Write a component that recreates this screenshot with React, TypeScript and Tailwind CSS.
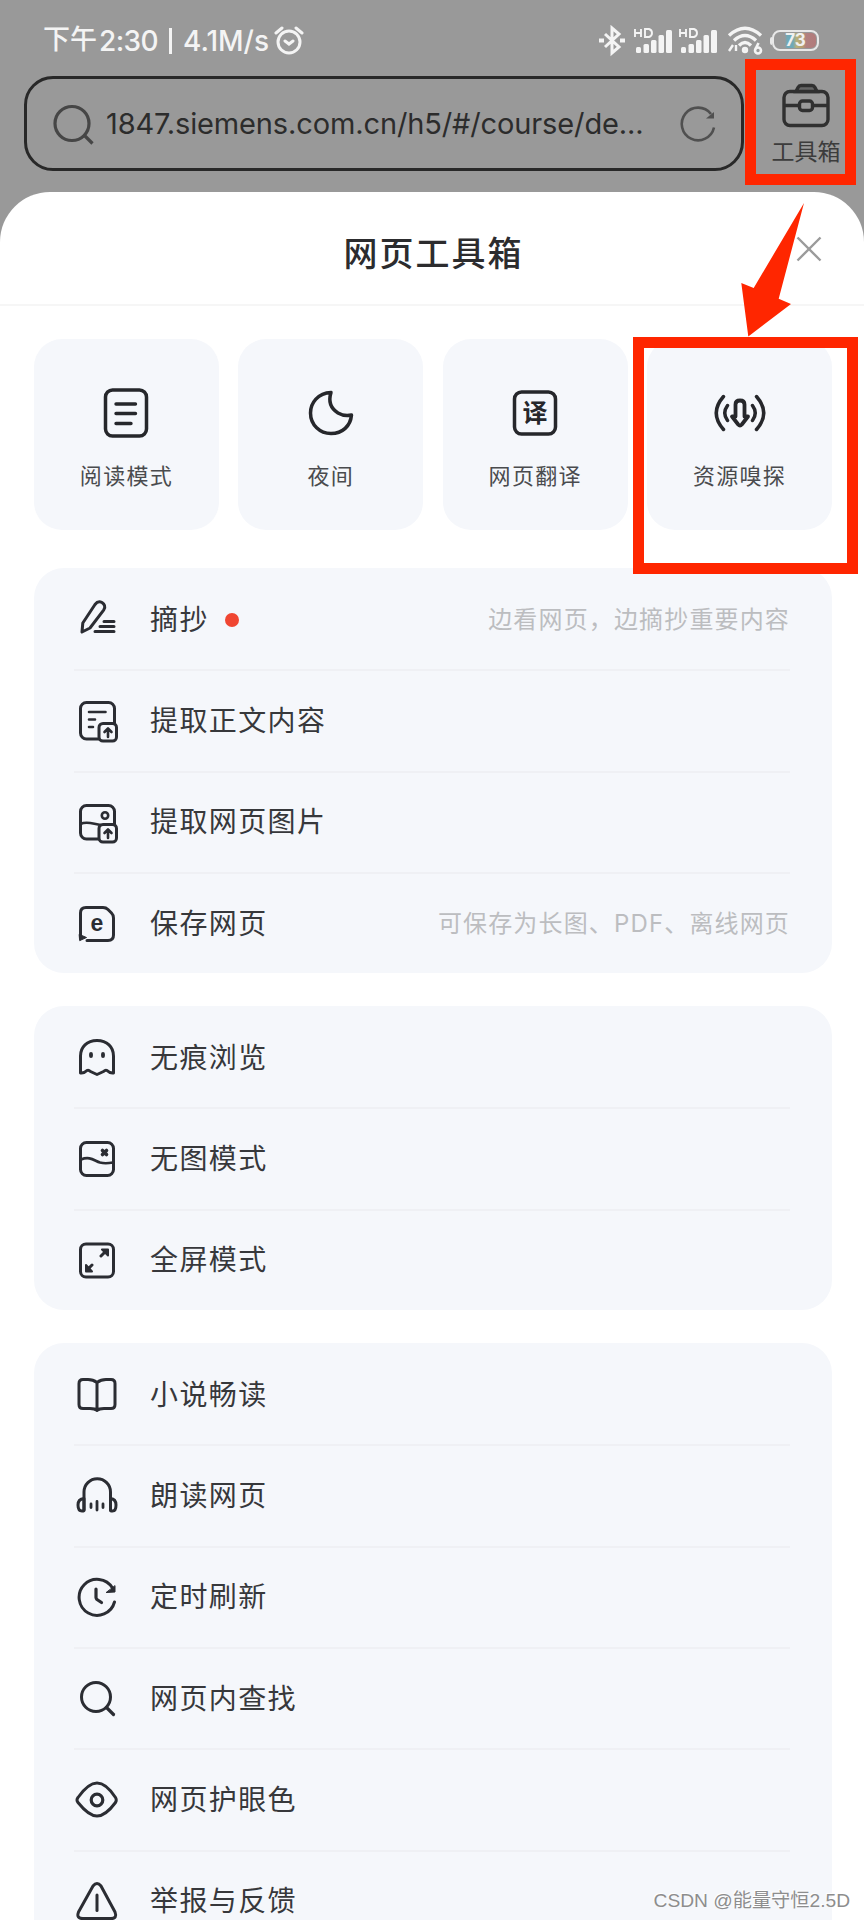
import type { ReactNode } from "react";

type Row = {
  label: string;
  icon: ReactNode;
  note?: string;
  dot?: boolean;
};

function RowIcon({ children }: { children: ReactNode }) {
  return (
    <svg
      className="w-11 h-11 shrink-0"
      viewBox="-22 -22 44 44"
      fill="none"
      stroke="#2b2d33"
      strokeWidth="3"
      strokeLinecap="round"
      strokeLinejoin="round"
    >
      {children}
    </svg>
  );
}

const UploadBox = () => (
  <>
    <rect x="3" y="2.500" width="17.500" height="17.500" rx="4" fill="#f5f7fb" />
    <path d="M12 16V8M8.500 11l3.500-3.500 3.500 3.500" strokeWidth="2.600" />
  </>
);

const groups: Row[][] = [
  [
    {
      label: "摘抄",
      note: "边看网页，边摘抄重要内容",
      dot: true,
      icon: (
        <RowIcon>
          <path d="M-14 12l.8-9L-1-15.500Q2-19.500 6-17.500Q10.500-14.500 7.800-10.200L-6 8z" />
          <path d="M8 1.500h10M4 6.500h14M-1 11.500h19" strokeWidth="3" />
        </RowIcon>
      ),
    },
    {
      label: "提取正文内容",
      icon: (
        <RowIcon>
          <rect x="-15.500" y="-18.500" width="34" height="36.500" rx="6" />
          <path d="M-7-9H9.500M-7-1.500H-1M-7 6h4" strokeWidth="2.600" />
          <UploadBox />
        </RowIcon>
      ),
    },
    {
      label: "提取网页图片",
      icon: (
        <RowIcon>
          <rect x="-15.500" y="-16.500" width="34" height="33.500" rx="6" />
          <path d="M-15.500 2C-9-1.500-3 2 5 3" strokeWidth="2.600" />
          <circle cx="9" cy="-6.500" r="3.200" strokeWidth="2.600" />
          <UploadBox />
        </RowIcon>
      ),
    },
    {
      label: "保存网页",
      note: "可保存为长图、PDF、离线网页",
      icon: (
        <RowIcon>
          <path d="M-15.500 14V-11q0-5.500 5.500-5.500H7q3 0 5 2l3.500 3.500q2 2 2 5V11q0 5.500-5.500 5.500H-9" />
          <path d="M-16.500 10.500L-9.500 13.500L-16 16.500z" fill="#2b2d33" strokeWidth="1" />
          <text
            x="1"
            y="6.500"
            textAnchor="middle"
            fill="#2b2d33"
            stroke="none"
            className="font-['Liberation_Sans',sans-serif] font-bold text-[23px]"
          >
            e
          </text>
        </RowIcon>
      ),
    },
  ],
  [
    {
      label: "无痕浏览",
      icon: (
        <RowIcon>
          <path d="M-15.500-2C-15.500-11-9-17.500 1-17.500S17.500-11 17.500-2V15Q14 15.500 11 12.500Q9.500 11.500 7.500 13.500L1 16.500L-5.500 13.500Q-7.500 11.500-9 12.500Q-12 15.500-15.500 15z" />
          <path d="M-5-4v2M7-4v2" strokeWidth="3.800" />
        </RowIcon>
      ),
    },
    {
      label: "无图模式",
      icon: (
        <RowIcon>
          <rect x="-15.500" y="-16.500" width="33" height="33" rx="6" />
          <path d="M-15 .5C-6-3-2 1.500 4 3.500Q9 5 17 3.500" strokeWidth="2.700" />
          <path d="M6.500-8.500l4 4M10.500-8.500l-4 4" strokeWidth="3.600" />
        </RowIcon>
      ),
    },
    {
      label: "全屏模式",
      icon: (
        <RowIcon>
          <rect x="-15.500" y="-16" width="33" height="33" rx="5.500" />
          <path d="M5-4l5-5M-4 5l-5 5" />
          <path d="M6-10.500h6v6zM-10 5v6.500h6z" fill="#2b2d33" strokeWidth="2" />
        </RowIcon>
      ),
    },
  ],
  [
    {
      label: "小说畅读",
      icon: (
        <RowIcon>
          <path d="M1-12.500Q-3-15.500-8-15.500H-13Q-17-15.500-17-11.500V9.500Q-17 13.500-13 13.500H-6Q-1 13.500 1 15.500Q3 13.500 8 13.500H15Q19 13.500 19 9.500V-11.500Q19-15.500 15-15.500H10Q5-15.500 1-12.500V14" />
        </RowIcon>
      ),
    },
    {
      label: "朗读网页",
      icon: (
        <RowIcon>
          <path d="M-12 14V-4A13.200 13.200 0 0 1 14.500-4V14" />
          <path d="M-12 2.500Q-18 3-18 9T-14 15Q-12 15.500-12 14zM14.500 2.500Q20 3 20 9T16.500 15Q14.500 15.500 14.500 14z" />
          <path d="M-5 8v3.500M1 5.500v8.500M7 8v3.500" strokeWidth="2.800" />
        </RowIcon>
      ),
    },
    {
      label: "定时刷新",
      icon: (
        <RowIcon>
          <path d="M18.500 5A18 18 0 1 1 16.500-9" />
          <path d="M10.500-4.500L19-5V-11z" fill="#2b2d33" strokeWidth="1" />
          <path d="M0-8V.5Q0 1.500 1 2.500L5.500 5.500" strokeWidth="3.200" />
        </RowIcon>
      ),
    },
    {
      label: "网页内查找",
      icon: (
        <RowIcon>
          <circle cx="0" cy="-2" r="14.500" />
          <path d="M10.500 8.500L17.500 15.500" strokeWidth="3.200" />
        </RowIcon>
      ),
    },
    {
      label: "网页护眼色",
      icon: (
        <RowIcon>
          <path d="M-18 2.500Q-20 0-18-2.500C-12-11-6-17 1-17S14-11 19.500-2.500Q21 0 19.500 2.500C14 10 8 16 1 16S-12 10-18 2.500z" />
          <circle cx="1" cy="0" r="5.800" strokeWidth="3.200" />
        </RowIcon>
      ),
    },
    {
      label: "举报与反馈",
      icon: (
        <RowIcon>
          <path d="M-3-15Q1-20 5-15L19 11Q21.500 17.500 15 17.500H-13Q-20 17.500-17.500 11z" />
          <path d="M1-6V9.500" />
        </RowIcon>
      ),
    },
  ],
];

const cards: { label: string; icon: ReactNode }[] = [
  {
    label: "阅读模式",
    icon: (
      <>
        <rect x="-20.500" y="-23" width="41" height="46" rx="7" />
        <path d="M-10-9h19.500M-10 .5h19.500M-10 10.500h15" strokeWidth="3.400" />
      </>
    ),
  },
  {
    label: "夜间",
    icon: (
      <path d="M0-20.500C-13-20-20.500-10-20.500 0C-20.500 12-11 20.500 0 20.500C11.500 20.500 19.500 13 20.500 2Q13 3.500 7 0C0-4.500-3-11 0-20.500z" />
    ),
  },
  {
    label: "网页翻译",
    icon: (
      <>
        <rect x="-20.500" y="-21" width="41" height="42" rx="7" />
        <text
          x="0"
          y="9"
          textAnchor="middle"
          fill="#26272b"
          stroke="none"
          className="font-['Noto_Sans_CJK_SC',sans-serif] font-bold text-[25px]"
        >
          译
        </text>
      </>
    ),
  },
  {
    label: "资源嗅探",
    icon: (
      <>
        <path d="M-4.500-8.500Q-4.500-12.500 0-12.500T4.500-8.500V3.500H8L1.800 11.500Q0 13.500-1.800 11.500L-8 3.500H-4.500z" strokeWidth="3.800" />
        <path d="M-12.500-7.500Q-18 0-12.500 7.500M12.500-7.500Q18 0 12.500 7.500M-16.500-16.500Q-31 0-16.500 16.500M16.500-16.500Q31 0 16.500 16.500" />
      </>
    ),
  },
];

function Signal() {
  return (
    <svg className="w-[40px] h-[28px]" viewBox="0 0 40 28" fill="#f4f4f4">
      <path d="M1 2v8M7 2v8M1 6h6M11 2v8h4q3-1 3-4t-3-4z" fill="none" stroke="#f4f4f4" strokeWidth="1.900" />
      <rect x="2" y="20" width="5" height="6" rx="1.500" />
      <rect x="9.500" y="17" width="5.500" height="9" rx="1.500" />
      <rect x="17" y="13" width="5.500" height="13" rx="1.500" />
      <rect x="24.500" y="8" width="5.500" height="18" rx="1.500" />
      <rect x="32" y="3" width="6" height="23" rx="1.500" />
    </svg>
  );
}

function StatusBar() {
  return (
    <div className="h-[76px] pt-[5px] pl-[43px] pr-[45px] flex items-center justify-between text-[#f4f4f4]">
      <div className="flex items-center">
        <span className="text-[27px] font-medium">下午</span>
        <span className="ml-[2px] text-[28px] font-medium tracking-[-0.6px]">2:30</span>
        <span className="ml-[11px] w-[3px] h-[26px] bg-[#f4f4f4]" />
        <span className="ml-[11px] text-[28px] font-medium tracking-[0px]">4.1M/s</span>
        <svg className="ml-[5px] w-[30px] h-[30px]" viewBox="0 0 30 30" fill="none" stroke="#f4f4f4" strokeWidth="3" strokeLinecap="round">
          <circle cx="15" cy="16" r="11" />
          <path d="M2 7l6-5M28 7l-6-5M11 15l4 3 4-3" />
        </svg>
      </div>
      <div className="flex items-center">
        <svg className="w-[28px] h-[32px]" viewBox="0 0 28 32" fill="none" stroke="#f4f4f4" strokeWidth="3">
          <path d="M7 9l14 13-7 6V3l7 6L7 22" />
          <path d="M1 15.500h5M22 15.500h5" strokeWidth="4" />
        </svg>
        <div className="ml-[8px] flex gap-[5px]">
          <Signal />
          <Signal />
        </div>
        <svg className="ml-[8px] w-[37px] h-[30px]" viewBox="0 0 37 30" fill="none" stroke="#f4f4f4" strokeWidth="3.400">
          <path d="M2 9.500Q18-5 34 9.500M7 14.500Q18 4.500 29 14.500M12 19.500Q18 13.500 24 19.500" />
          <circle cx="18" cy="24" r="1.500" />
          <path d="M2 25l4-6M9 19v6" strokeWidth="2.400" />
          <circle cx="31" cy="24.500" r="3" strokeWidth="2.600" />
          <path d="M28.500 23l3-6" strokeWidth="2.600" />
        </svg>
        <div className="ml-[6px] w-[2px] h-[8px] bg-[#e8e8e8] rounded-l" />
        <div className="w-[47px] h-[21px] rounded-[8px] border-2 border-[#e8e8e8] p-px">
          <div className="h-full rounded-[5px] bg-[linear-gradient(90deg,#999_0%,#999_24%,#6fa9b8_30%,#6fa9b8_44%,#b8b07a_52%,#b8a070_66%,#b08080_76%,#b27b7b_100%)] flex items-center justify-center text-[17px] font-bold text-[#f0f0f0]">
            73
          </div>
        </div>
      </div>
    </div>
  );
}

function AddressBar() {
  return (
    <div className="flex">
      <div className="ml-[24px] w-[720px] h-[95px] rounded-[29px] border-[3.5px] border-[#282828] flex items-center pl-[25px] pr-[23px]">
        <svg className="w-[44px] h-[44px] shrink-0" viewBox="0 0 44 44" fill="none" stroke="#464646" strokeWidth="3.200">
          <circle cx="20" cy="21.500" r="17" />
          <path d="M32 33l8.500 8.500" />
        </svg>
        <span className="ml-[10px] w-[545px] whitespace-nowrap text-[29px] tracking-[-0.13px] text-[#2c2c2c]">
          1847.siemens.com.cn/h5/#/course/de...
        </span>
        <svg className="ml-auto w-[40px] h-[40px] shrink-0" viewBox="-20 -20 40 40" fill="none" stroke="#505050" strokeWidth="2.600">
          <path d="M16 3.500A16.300 16.300 0 1 1 13-10" />
          <path d="M8-5.500h8v-6.500z" fill="#505050" stroke="none" />
        </svg>
      </div>
      <div className="ml-[26px] w-[72px] pt-[7px] flex flex-col items-center">
        <svg className="w-[50px] h-[46px]" viewBox="0 0 50 46" fill="none" stroke="#303030" strokeWidth="3.400">
          <rect x="3" y="8.500" width="44" height="34" rx="6" />
          <path d="M15 8.500l2-4q1-2 3-2h11q2 0 3 2l2 4z" fill="#666" />
          <path d="M3 22.500h15M32 22.500h15" />
          <rect x="18.500" y="18" width="13" height="9.500" rx="3" />
        </svg>
        <span className="mt-[6px] leading-[34px] text-[23px] whitespace-nowrap text-[#3c3c3c]">工具箱</span>
      </div>
    </div>
  );
}

function MenuGroup({ rows }: { rows: Row[] }) {
  return (
    <div className="rounded-[30px] bg-[#f5f7fb] pt-[2px] pl-[40px] pr-[42px]">
      {rows.map((row, i) => (
        <div
          key={row.label}
          className={
            "flex items-center " +
            (i < rows.length - 1 ? "h-[101.3px] border-b-2 border-[#eff0f4]" : "h-[99.3px]")
          }
        >
          {row.icon}
          <span className="ml-[32px] text-[28px] tracking-[1.4px] text-[#37383b]">{row.label}</span>
          {row.dot && <span className="ml-[16px] w-[14px] h-[14px] rounded-full bg-[#f04632]" />}
          {row.note && (
            <span className="ml-auto text-[24px] tracking-[1.15px] text-[#bcbdc0]">{row.note}</span>
          )}
        </div>
      ))}
    </div>
  );
}

export default function App() {
  return (
    <div className="relative w-[864px] h-[1920px] overflow-hidden bg-[#999] font-[Inter,'Noto_Sans_CJK_SC',sans-serif]">
      <StatusBar />
      <AddressBar />

      <div className="mt-[21px] h-[1728px] rounded-t-[50px] bg-white overflow-hidden">
        <div className="h-[114px] pr-[41px] border-b-2 border-[#f6f6f6] grid grid-cols-[1fr_auto_1fr] items-center pl-[44px]">
          <span />
          <h1 className="pt-[11px] text-[34px] font-medium tracking-[2px] text-[#2c2c2e]">网页工具箱</h1>
          <svg className="mt-[2px] justify-self-end w-[28px] h-[28px]" viewBox="0 0 28 28" stroke="#9b9b9b" strokeWidth="2.400">
            <path d="M2.500 2.500l23 23M25.500 2.500l-23 23" />
          </svg>
        </div>

        <div className="pl-[34px] pr-[32px] pt-[33px]">
          <div className="grid grid-cols-4 gap-[19.500px]">
            {cards.map((card) => (
              <div key={card.label} className="h-[191px] rounded-[28px] bg-[#f5f7fb] flex flex-col items-center">
                <svg
                  className="mt-[46px] w-[56px] h-[56px]"
                  viewBox="-28 -28 56 56"
                  fill="none"
                  stroke="#26272b"
                  strokeWidth="3.500"
                  strokeLinecap="round"
                  strokeLinejoin="round"
                >
                  {card.icon}
                </svg>
                <span className="mt-[18px] text-[22px] leading-[34px] tracking-[1.3px] text-[#4a4b4e]">{card.label}</span>
              </div>
            ))}
          </div>

          <div className="mt-[38px] flex flex-col gap-[33px]">
            {groups.map((rows) => (
              <MenuGroup key={rows[0].label} rows={rows} />
            ))}
          </div>
        </div>
      </div>

      {/* highlight marks */}
      <div className="absolute left-[745px] top-[59px] w-[111px] h-[126px] border-[11px] border-[#ff2600]" />
      <div className="absolute left-[633px] top-[337px] w-[225px] h-[237px] border-[11px] border-[#ff2600]" />
      <svg className="absolute left-[740px] top-[202px] w-[66px] h-[136px]" viewBox="740 202 66 136" fill="#ff2600">
        <path d="M804 203L778.700 298.700L791 304L748.300 336.500L741.300 283L753.700 288z" />
      </svg>
      <div className="absolute right-[14px] bottom-[4px] whitespace-nowrap text-[19.2px] leading-[30px] text-[#8d8d8d] font-['Liberation_Sans','Noto_Sans_CJK_SC',sans-serif] [text-shadow:-1px_-1px_0_#fff]">
        CSDN @能量守恒2.5D
      </div>
    </div>
  );
}
